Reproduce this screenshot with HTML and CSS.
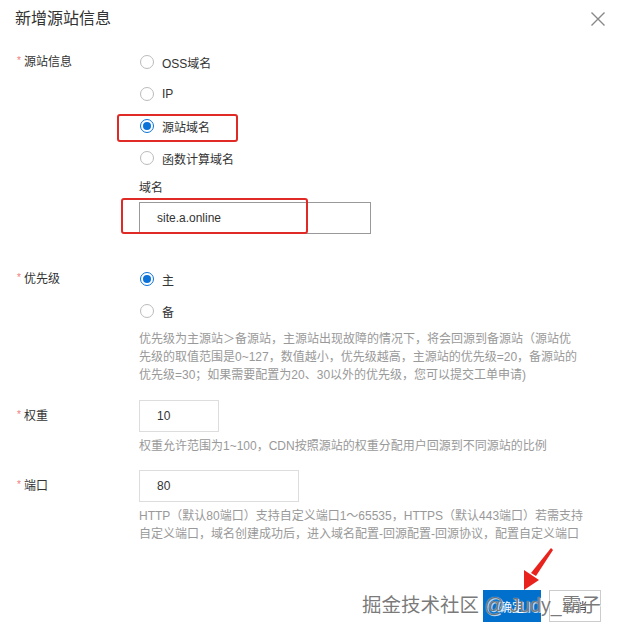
FILE: index.html
```html
<!DOCTYPE html>
<html lang="zh-CN">
<head>
<meta charset="utf-8">
<title>新增源站信息</title>
<link rel="stylesheet" href="styles.css">
</head>
<body>
<div class="dialog">
  <div class="header">
    <div class="title">新增源站信息</div>
    <svg class="close" width="14" height="14" viewBox="0 0 14 14"><path d="M0.5 0.5 L13.5 13.5 M13.5 0.5 L0.5 13.5" stroke="#888" stroke-width="1.4" fill="none"/></svg>
  </div>
  <div class="form">
    <div class="row">
      <div class="label"><span class="req">*</span>源站信息</div>
      <div class="field">
        <div class="opt"><span class="radio"></span>OSS域名</div>
        <div class="opt"><span class="radio"></span>IP</div>
        <div class="opt"><span class="radio on"></span>源站域名</div>
        <div class="opt"><span class="radio"></span>函数计算域名</div>
        <div class="sublabel">域名</div>
        <div class="input w-domain">site.a.online</div>
      </div>
    </div>
    <div class="row r-priority">
      <div class="label"><span class="req">*</span>优先级</div>
      <div class="field">
        <div class="opt"><span class="radio on"></span>主</div>
        <div class="opt"><span class="radio"></span>备</div>
        <div class="help help-first">优先级为主源站＞备源站，主源站出现故障的情况下，将会回源到备源站（源站优<br>先级的取值范围是0~127，数值越小，优先级越高，主源站的优先级=20，备源站的<br>优先级=30；如果需要配置为20、30以外的优先级，您可以提交工单申请)</div>
      </div>
    </div>
    <div class="row r-weight">
      <div class="label"><span class="req">*</span>权重</div>
      <div class="field">
        <div class="input w-weight">10</div>
        <div class="help">权重允许范围为1~100，CDN按照源站的权重分配用户回源到不同源站的比例</div>
      </div>
    </div>
    <div class="row r-port">
      <div class="label"><span class="req">*</span>端口</div>
      <div class="field">
        <div class="input w-port">80</div>
        <div class="help">HTTP（默认80端口）支持自定义端口1～65535，HTTPS（默认443端口）若需支持<br>自定义端口，域名创建成功后，进入域名配置-回源配置-回源协议，配置自定义端口</div>
      </div>
    </div>
  </div>
  <div class="footer">
    <button class="btn primary">确定</button>
    <button class="btn">取消</button>
  </div>
  <div class="mark mark-1"></div>
  <div class="mark mark-2"></div>
  <svg class="arrow" width="619" height="632" viewBox="0 0 619 632"><polygon points="551,548 553,550 536,576 531,573" fill="#e8231d"/><polygon points="524,590 524,570 539,580" fill="#e8231d"/></svg>
  <div class="watermark">掘金技术社区 @ Judy_霸子</div>
</div>
</body>
</html>
```
FILE: styles.css
```css
html, body {
  margin: 0;
  padding: 0;
  background: #fff;
}
body {
  font-family: "Liberation Sans", "Noto Sans CJK SC", sans-serif;
  font-size: 12px;
  color: #333;
}
.dialog {
  position: relative;
  width: 619px;
  height: 632px;
  overflow: hidden;
}
.header {
  height: 37px;
  display: flex;
  align-items: center;
  justify-content: space-between;
  padding: 0 14px 0 15px;
}
.title {
  font-size: 16px;
  line-height: 20px;
  color: #333;
}
.close {
  display: block;
}
.form {
  padding: 9px 0 0 17px;
}
.row {
  display: grid;
  grid-template-columns: 122px 1fr;
}
.label {
  line-height: 32px;
  height: 32px;
  color: #333;
}
.req {
  color: #f07a7a;
  font-size: 10px;
  margin-right: 3px;
  position: relative;
  top: -2px;
}
.opt {
  height: 32px;
  display: flex;
  align-items: center;
  color: #333;
}
.radio {
  width: 12px;
  height: 12px;
  border: 1px solid #bbb;
  border-radius: 50%;
  margin: 0 8px 0 1px;
  box-sizing: content-box;
  position: relative;
}
.radio.on {
  border-color: #0a72d8;
}
.radio.on::after {
  content: "";
  position: absolute;
  left: 2px;
  top: 2px;
  width: 8px;
  height: 8px;
  border-radius: 50%;
  background: #0a72d8;
}
.sublabel {
  margin-top: 6px;
  line-height: 16px;
}
.input {
  box-sizing: border-box;
  height: 32px;
  border: 1px solid #ddd;
  padding-left: 17px;
  line-height: 30px;
  margin-top: 6px;
  color: #333;
}
.w-domain { width: 232px; border-color: #999; }
.w-weight { width: 80px; margin-top: 0; }
.w-port { width: 160px; margin-top: 0; }
.r-priority { margin-top: 29px; }
.r-weight { margin-top: 16px; }
.r-port { margin-top: 15px; }
.help {
  color: #999;
  line-height: 18px;
  margin-top: 5px;
  white-space: nowrap;
}
.help-first { margin-top: 3px; }
.footer {
  display: flex;
  justify-content: flex-end;
  gap: 8px;
  padding: 47px 18px 0 0;
}
.btn {
  font-family: inherit;
  font-size: 12px;
  height: 32px;
  width: 52px;
  border: 1px solid #ccc;
  background: #fff;
  color: #333;
  padding: 0;
}
.btn.primary {
  width: 58px;
  background: #0070cc;
  border-color: #0070cc;
  color: #fff;
}
.mark {
  position: absolute;
  border: 2px solid #e02a25;
  border-radius: 3px;
  box-sizing: border-box;
}
.mark-1 { left: 117px; top: 114px; width: 121px; height: 28px; }
.mark-2 { left: 121px; top: 198px; width: 187px; height: 36px; }
.arrow {
  position: absolute;
  left: 0;
  top: 0;
  pointer-events: none;
}
.watermark {
  position: absolute;
  left: 362px;
  top: 592px;
  font-size: 19.5px;
  line-height: 26px;
  color: rgba(85, 85, 85, 0.78);
  text-shadow: 0 0 1px rgba(255, 255, 255, 0.9), 1px 1px 0 rgba(255, 255, 255, 0.7);
  white-space: nowrap;
  pointer-events: none;
}
```
